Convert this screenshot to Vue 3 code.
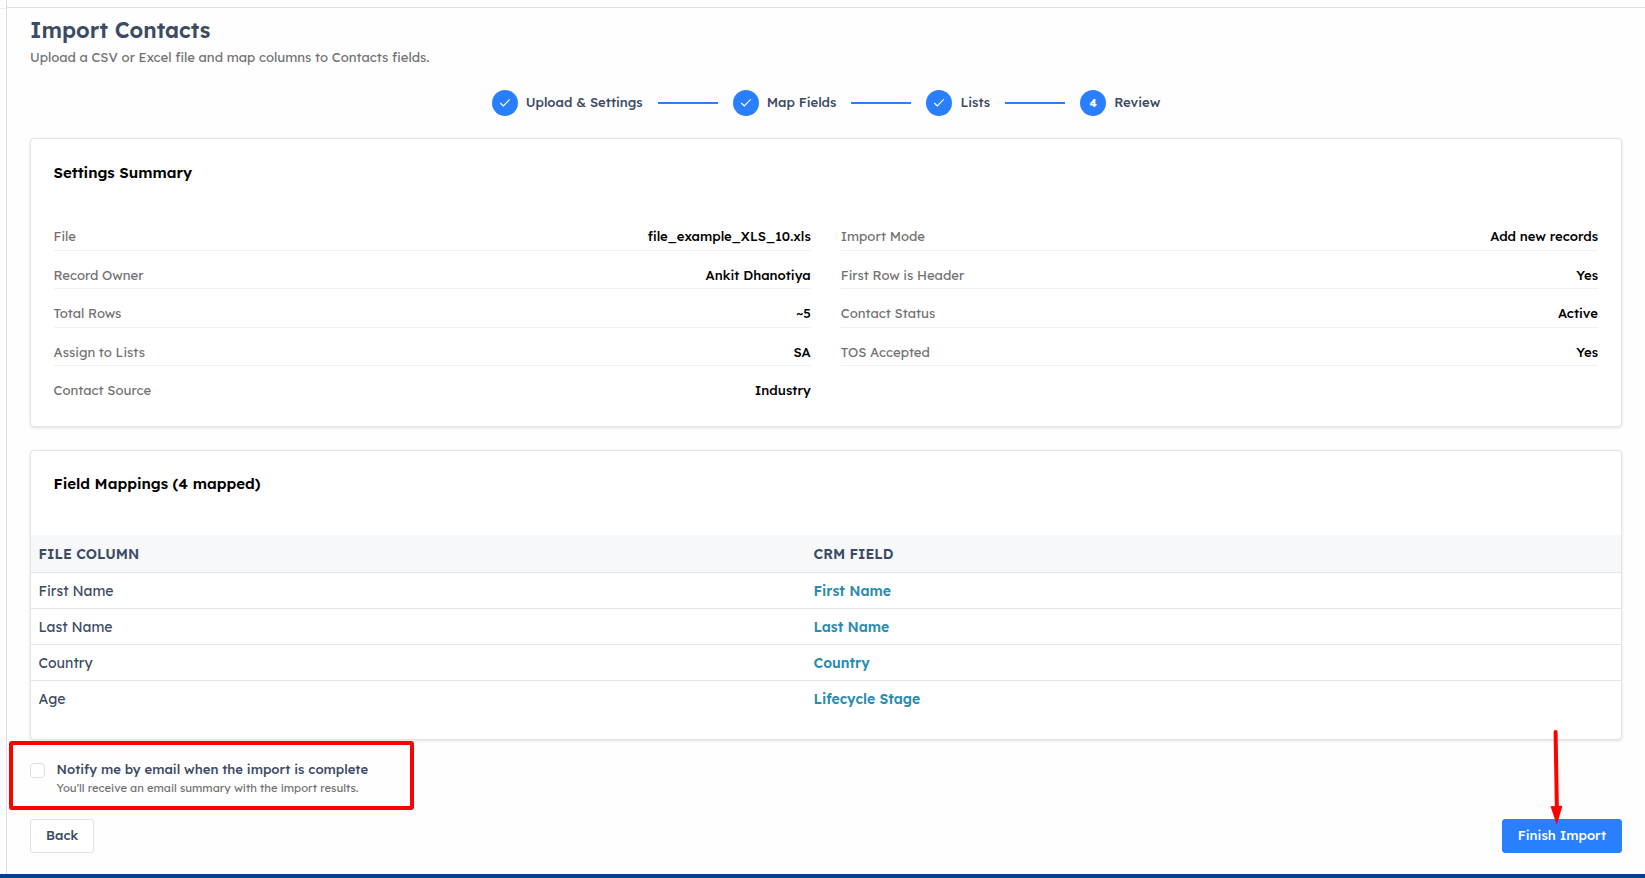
<template>
  <div class="page">
    <div class="shell">
      <div class="rail"></div>
      <main class="content">
        <header class="page-header">
          <h1>Import Contacts</h1>
          <p>Upload a CSV or Excel file and map columns to Contacts fields.</p>
        </header>

        <div class="stepper">
          <template v-for="(step, idx) in steps" :key="step.label">
            <span v-if="idx > 0" class="step-line"></span>
            <div class="step">
              <span class="step-circle">
                <svg v-if="step.done" width="12" height="12" viewBox="0 0 12 12" fill="none">
                  <path d="M1.3 6 4.3 9 10.7 2.4" stroke="#fff" stroke-width="1.1" />
                </svg>
                <template v-else>{{ idx + 1 }}</template>
              </span>
              <span class="step-label">{{ step.label }}</span>
            </div>
          </template>
        </div>

        <section class="card summary">
          <h2>Settings Summary</h2>
          <div class="summary-grid">
            <div v-for="item in summary" :key="item.label" class="summary-row">
              <span class="summary-label">{{ item.label }}</span>
              <span class="summary-value">{{ item.value }}</span>
            </div>
          </div>
        </section>

        <section class="card mappings">
          <h2>Field Mappings ({{ mappings.length }} mapped)</h2>
          <table>
            <thead>
              <tr>
                <th class="col-file">FILE COLUMN</th>
                <th>CRM FIELD</th>
              </tr>
            </thead>
            <tbody>
              <tr v-for="row in mappings" :key="row.column">
                <td>{{ row.column }}</td>
                <td class="crm-field">{{ row.field }}</td>
              </tr>
            </tbody>
          </table>
        </section>

        <label class="notify">
          <input v-model="notify" type="checkbox" />
          <span class="notify-text">
            <span class="notify-title">Notify me by email when the import is complete</span>
            <span class="notify-hint">You'll receive an email summary with the import results.</span>
          </span>
        </label>

        <footer class="actions">
          <button type="button" class="btn">Back</button>
          <button type="button" class="btn btn-primary">Finish Import</button>
        </footer>
      </main>
    </div>
    <div class="bottom-bar"></div>

    <!-- annotations over the page -->
    <div class="mark-box"></div>
    <svg class="mark-arrow" width="14" height="98" viewBox="0 0 14 98">
      <path d="M5.6 3 6.9 80" stroke="#f00" stroke-width="4" stroke-linecap="round" />
      <path d="M0.5 77.3 12.5 76.7 6.8 96Z" fill="#f00" />
    </svg>
  </div>
</template>

<script setup>
import { ref } from 'vue'

const notify = ref(false)

const steps = [
  { label: 'Upload & Settings', done: true },
  { label: 'Map Fields', done: true },
  { label: 'Lists', done: true },
  { label: 'Review', done: false }
]

const summary = [
  { label: 'File', value: 'file_example_XLS_10.xls' },
  { label: 'Import Mode', value: 'Add new records' },
  { label: 'Record Owner', value: 'Ankit Dhanotiya' },
  { label: 'First Row is Header', value: 'Yes' },
  { label: 'Total Rows', value: '~5' },
  { label: 'Contact Status', value: 'Active' },
  { label: 'Assign to Lists', value: 'SA' },
  { label: 'TOS Accepted', value: 'Yes' },
  { label: 'Contact Source', value: 'Industry' }
]

const mappings = [
  { column: 'First Name', field: 'First Name' },
  { column: 'Last Name', field: 'Last Name' },
  { column: 'Country', field: 'Country' },
  { column: 'Age', field: 'Lifecycle Stage' }
]
</script>

<style>
body {
  margin: 0;
  overflow: hidden;
}
</style>

<style scoped>
.page {
  position: relative;
  display: flex;
  flex-direction: column;
  height: 878px;
  box-sizing: border-box;
  overflow: hidden;
  background: #fefefe;
  color: #3c4b63;
  font-family: Lexend, Inter, sans-serif;
  font-size: 13.12px;
}
.page * {
  box-sizing: border-box;
}
.shell {
  display: flex;
  flex: 1;
  min-height: 0;
}
.rail {
  width: 7px;
  flex: none;
  border-right: 1px solid #dee0e8;
  background: linear-gradient(#edeef1, #edeef1) 0 8px / 6px 1px no-repeat;
}
.content {
  flex: 1;
  margin-top: 7px;
  padding: 0 23px;
  border-top: 1px solid #dee0e8;
}
h1,
h2,
p {
  margin: 0;
}
h1 {
  padding-top: 8px;
  font-size: 21.6px;
  font-weight: 600;
  line-height: 28px;
}
.page-header {
  height: 82px;
}
.page-header p {
  margin-top: 3px;
  color: #717171;
  line-height: 20px;
}
.stepper {
  display: flex;
  align-items: center;
  justify-content: center;
  height: 26px;
}
.step {
  display: flex;
  align-items: center;
  gap: 8px;
}
.step-circle {
  display: flex;
  align-items: center;
  justify-content: center;
  width: 26px;
  height: 26px;
  border-radius: 50%;
  background: #2a7fff;
  color: #fff;
  font-size: 11px;
  font-weight: 700;
  line-height: 14px;
}
.step-label {
  padding-bottom: 2px;
  font-weight: 500;
  white-space: nowrap;
}
.step-line {
  width: 60px;
  height: 2px;
  margin: 0 15px;
  background: #2a7fff;
}
.card {
  border: 1px solid #e2e4e6;
  border-radius: 4px;
  background: #fff;
  box-shadow: 0 1px 3px rgba(0, 0, 0, 0.12);
}
.card h2 {
  padding: 24px 22.5px 0;
  color: #000;
  font-size: 15px;
  font-weight: 600;
  line-height: 20px;
}
.summary {
  height: 289px;
  margin-top: 22px;
}
.summary-grid {
  display: grid;
  grid-template-columns: 1fr 1fr;
  column-gap: 30px;
  padding: 41px 23px 0 22.5px;
}
.summary-row {
  display: flex;
  justify-content: space-between;
  height: 38.4px;
  padding-top: 15px;
  border-bottom: 1px solid #f0f1f2;
  line-height: 18px;
}
.summary-row:last-child {
  border-bottom: 0;
}
.summary-row:nth-child(-n + 2) {
  height: 27px;
  padding-top: 3px;
}
.summary-label {
  color: #717171;
}
.summary-value {
  color: #000;
  font-weight: 500;
}
.mappings {
  height: 290px;
  margin-top: 23px;
}
.mappings h2 {
  padding-top: 23px;
}
table {
  width: 100%;
  margin-top: 41px;
  border-collapse: separate;
  border-spacing: 0;
  table-layout: fixed;
  font-size: 14px;
  line-height: 20px;
}
th,
td {
  height: 36px;
  padding: 1px 7.5px 0;
  border-bottom: 1px solid #e2e4e6;
  text-align: left;
}
th {
  height: 38px;
  background: #f6f8fa;
  font-weight: 600;
}
.col-file {
  width: 775px;
}
tbody tr:last-child td {
  border-bottom-color: transparent;
}
.crm-field {
  color: #2a8cb0;
  font-weight: 600;
}
.notify {
  display: flex;
  gap: 11.5px;
  width: fit-content;
  margin-top: 19px;
}
.notify input {
  appearance: none;
  width: 15px;
  height: 15px;
  margin: 4px 0 0;
  border: 1px solid #dcdfe3;
  border-radius: 4px;
  background: #fff;
}
.notify-text {
  display: flex;
  flex-direction: column;
}
.notify-title {
  font-weight: 500;
  line-height: 20px;
}
.notify-hint {
  color: #717171;
  font-size: 11.2px;
  line-height: 18px;
}
.actions {
  display: flex;
  justify-content: space-between;
  margin-top: 22px;
}
.btn {
  height: 34px;
  padding: 0 15px 2px;
  border: 1px solid #e0e3e6;
  border-radius: 3px;
  background: #fff;
  color: #3c4b63;
  font: inherit;
  font-weight: 500;
}
.btn-primary {
  border-color: #2a7fff;
  background: #2a7fff;
  color: #fff;
}
.bottom-bar {
  height: 4px;
  background: #023e96;
}
.mark-box {
  position: absolute;
  left: 9px;
  top: 741px;
  width: 405px;
  height: 69px;
  border: 4px solid #f00;
  border-radius: 3px;
}
.mark-arrow {
  position: absolute;
  left: 1550px;
  top: 729px;
}
</style>
